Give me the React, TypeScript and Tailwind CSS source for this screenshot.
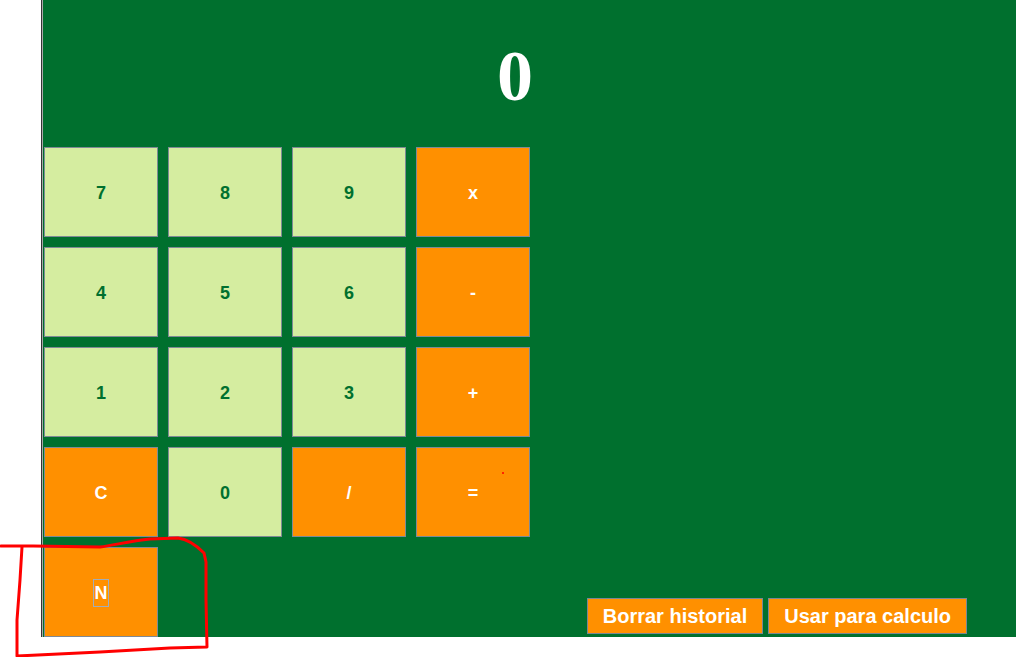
import React from 'react';

type Key = { label: string; op?: boolean };

const keys: Key[] = [
  { label: '7' },
  { label: '8' },
  { label: '9' },
  { label: 'x', op: true },
  { label: '4' },
  { label: '5' },
  { label: '6' },
  { label: '-', op: true },
  { label: '1' },
  { label: '2' },
  { label: '3' },
  { label: '+', op: true },
  { label: 'C', op: true },
  { label: '0' },
  { label: '/', op: true },
  { label: '=', op: true },
];

const keyCls =
  'relative flex items-center justify-center border border-[#7f8a96] pt-[2px] text-[18px] font-bold';

const histCls =
  'h-[36px] border border-[#7b8794] bg-[#ff9000] px-[15px] text-[20px] font-bold text-white';

export default function App() {
  return (
    <div className="relative min-h-[657px] bg-white font-['Liberation_Sans',Arial,sans-serif]">
      <div className="ml-[41px] border-l border-[#353535]">
        <div className="flex h-[637px] border-l border-[#a8a8a8] bg-[#00702e] pl-[1px]">
          {/* calculator */}
          <div className="w-[486px] shrink-0">
            <div className="-mr-[3px] h-[147px] pt-[40px] text-right font-['Liberation_Serif','Times_New_Roman',serif] text-[72px] font-bold leading-[72px] text-white">
              0
            </div>
            <div className="grid grid-cols-[repeat(4,114px)] auto-rows-[90px] gap-[10px]">
              {keys.map((k) => (
                <button
                  key={k.label}
                  type="button"
                  className={
                    keyCls +
                    (k.op ? ' bg-[#ff9000] text-white' : ' bg-[#d5eda0] text-[#00702e]')
                  }
                >
                  {k.label}
                  {k.label === '=' && (
                    <span className="absolute left-[85px] top-[24px] h-[2px] w-[2px] rounded-full bg-[#ff0000]" />
                  )}
                </button>
              ))}
              <button type="button" className={keyCls + ' bg-[#ff9000] text-white'}>
                <div className="flex h-[28px] w-[16px] items-center justify-center border border-solid border-[#a3adb8]">
                  N
                </div>
              </button>
            </div>
          </div>

          {/* historial */}
          <div className="flex flex-1 items-end justify-end gap-[5px] pb-[3px] pr-[49px]">
            <button type="button" className={histCls}>
              Borrar historial
            </button>
            <button type="button" className={histCls}>
              Usar para calculo
            </button>
          </div>
        </div>
      </div>

      {/* red hand-drawn mark */}
      <svg
        className="pointer-events-none absolute left-0 top-0"
        width="1016"
        height="657"
        viewBox="0 0 1016 657"
      >
        <path
          d="M1 546 L33 546 L100 547 C115 545 130 541 150 539 L178 538 C186 539 196 545 204 553 L206 562 L206 600 L207 647 L170 648 L100 652 L17 656 L17 620 L20 580 L22 547"
          fill="none"
          stroke="#ff0000"
          strokeWidth="3"
          strokeLinejoin="round"
          strokeLinecap="round"
        />
      </svg>
    </div>
  );
}
